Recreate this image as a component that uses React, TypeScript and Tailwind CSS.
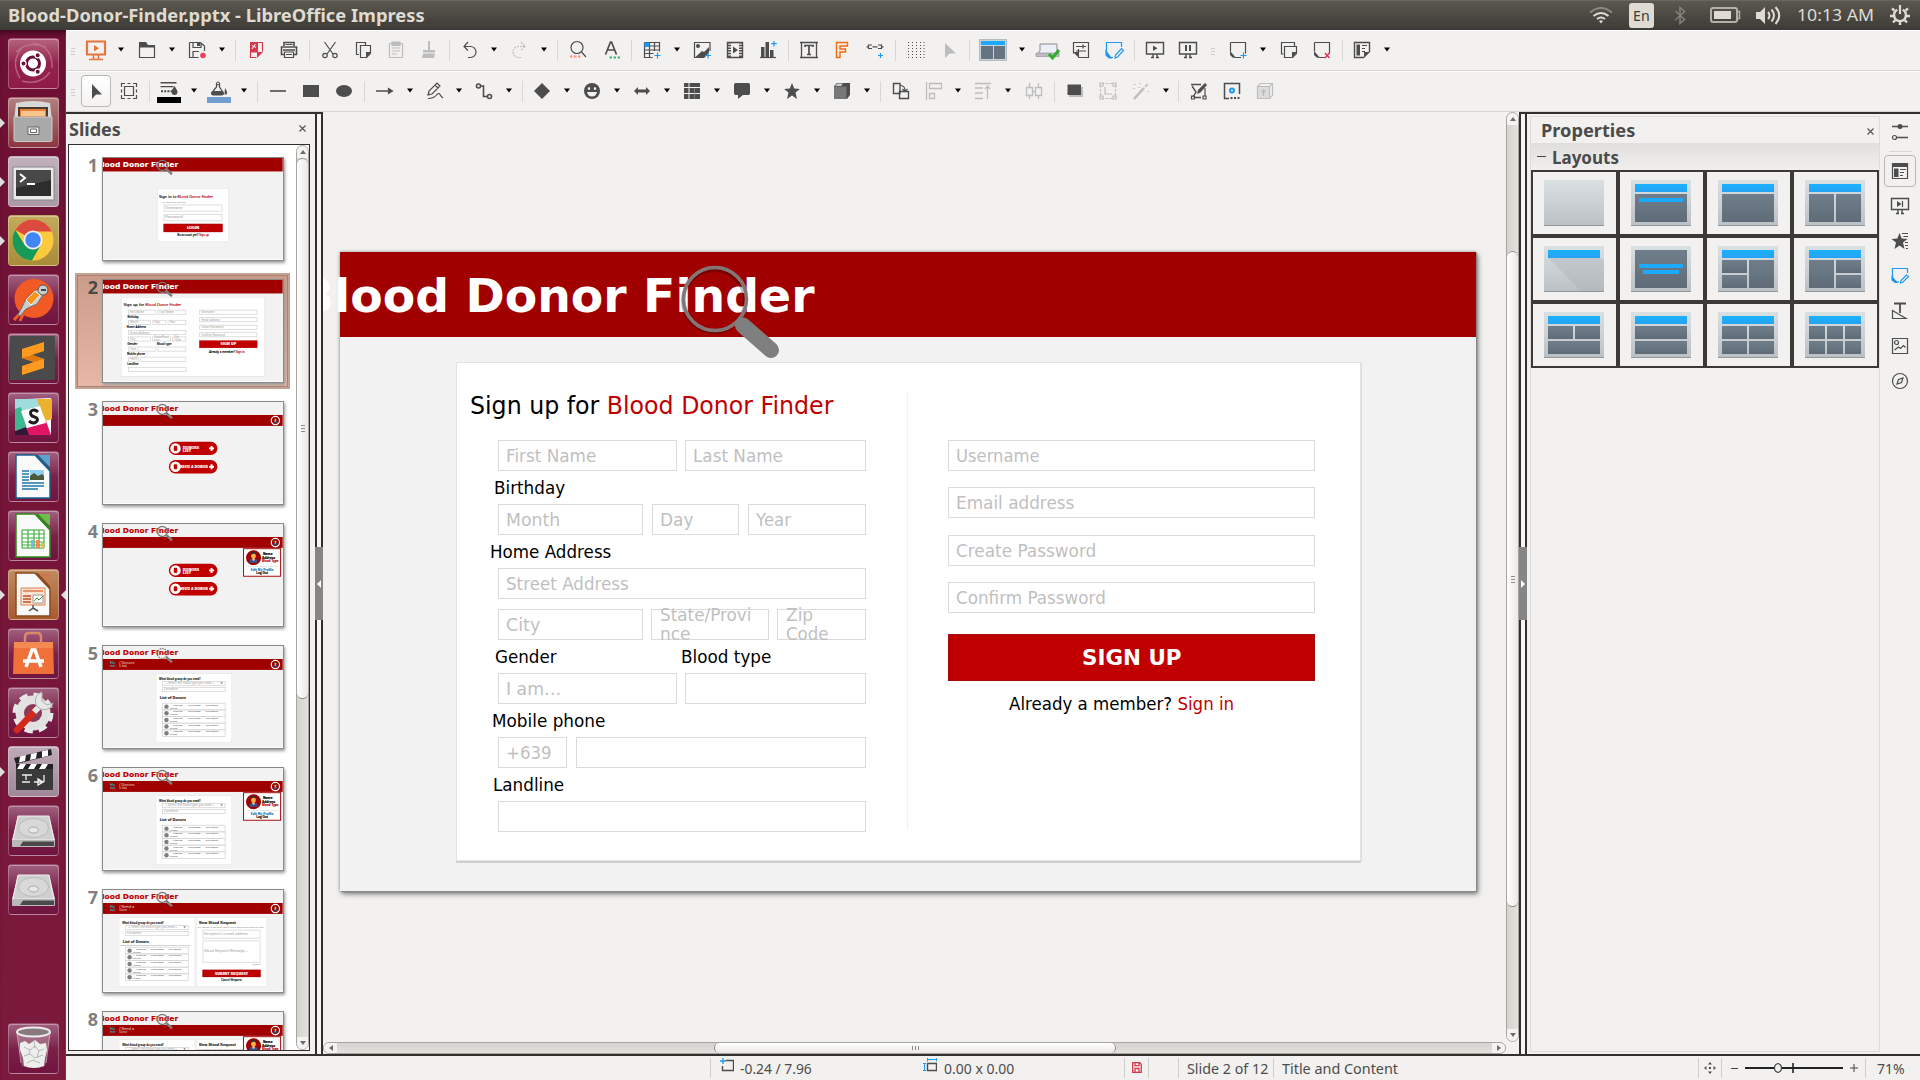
import React, { useLayoutEffect, useRef } from "react";

/* ---------- text ---------- */

/** Text squeezed or stretched to a given width. */
function Fit({ w, className = "", children }: { w: number; className?: string; children: React.ReactNode }) {
  const ref = useRef<HTMLSpanElement>(null);
  useLayoutEffect(() => {
    const el = ref.current;
    if (el && el.offsetWidth) el.style.transform = `scaleX(${w / el.offsetWidth})`;
  }, [w]);
  return (
    <span className={`inline-block shrink-0 whitespace-nowrap ${className}`} style={{ width: w }}>
      <span ref={ref} className="inline-block origin-left whitespace-pre">
        {children}
      </span>
    </span>
  );
}

/* ---------- slides (1136 x 639) ---------- */

const GRAY = "text-[#bfbfbf]";
const CARD = "bg-white border border-[#e3e3e3] shadow-[0_2px_0_#cfcfcf,1px_0_0_#dedede]";
const THICK = "border-4 border-[#e3e3e3] bg-white";

/** Form field; grows to the row's free width when it has no width class. */
function Field({ className = "flex-1", t, w = 0 }: { className?: string; t?: string; w?: number }) {
  return (
    <div className={`fld flex h-[31px] items-center border border-[#dadada] bg-white pt-[2px] pl-[7px] ${className}`}>
      {t && <Fit w={w} className={GRAY}>{t}</Fit>}
    </div>
  );
}

/** Field whose text breaks into two lines and spills over its border. */
function TallField({ className, lines }: { className: string; lines: [string, number][] }) {
  return (
    <div className={`fld flex h-[31px] flex-col justify-center border border-[#dadada] bg-white pl-[8px] ${className}`}>
      {lines.map(([t, w]) => <Fit key={t} w={w} className={`leading-[19px] ${GRAY}`}>{t}</Fit>)}
    </div>
  );
}

const Label = ({ className, w, children }: { className: string; w: number; children: string }) => (
  <div className={`h-[33px] pt-px leading-[32px] ${className}`}><Fit w={w}>{children}</Fit></div>
);

function Lens({ dashed = false }: { dashed?: boolean }) {
  return (
    <svg className="absolute top-[8px] left-[335px]" width="110" height="104" viewBox="335 8 110 104" fill="none">
      <circle cx="374" cy="49" r="31" stroke="#000" strokeOpacity=".25" strokeWidth="4" />
      <circle className="ring" cx="375" cy="47" r="31.500" stroke="#7f7f7f" strokeWidth="3.600" strokeDasharray={dashed ? "8 8" : undefined} />
      {!dashed && <circle cx="375" cy="47" r="31.500" stroke="#a33" strokeOpacity=".35" strokeWidth="1.600" strokeDasharray="1.500 1.500" />}
      <path d="M403 73.500 431 98" stroke="#7f7f7f" strokeWidth="16" strokeLinecap="round" />
    </svg>
  );
}

const Title = ({ c }: { c: string }) => (
  <Fit w={517} className={`-ml-[42px] text-[47px] leading-[47px] font-bold ${c}`}>Blood Donor Finder</Fit>
);

function Banner() {
  return (
    <div className="h-[85px] bg-[#a00000] pt-[20px]">
      <Title c="text-white" />
      <Lens />
    </div>
  );
}

function Slide2() {
  return (
    <>
      <Banner />
      <div className={`mt-[25px] ml-[116px] flex h-[499px] w-[905px] text-[17px] ${CARD}`}>
        <div className="flex w-[450px] flex-col pr-[41px] pl-[41px]">
          <div className="-ml-[28px] h-[77px] pt-[9px] text-[24px] leading-[68px]">
            <Fit w={363}>Sign up for <span className="text-[#c00000]">Blood Donor Finder</span></Fit>
          </div>
          <div className="flex gap-[8px]"><Field className="w-[179px]" t="First Name" w={90} /><Field t="Last Name" w={90} /></div>
          <Label className="-ml-[4px]" w={71}>Birthday</Label>
          <div className="flex gap-[9px]"><Field className="w-[145px]" t="Month" w={54} /><Field className="w-[87px]" t="Day" w={34} /><Field t="Year" w={35} /></div>
          <Label className="-ml-[8px]" w={121}>Home Address</Label>
          <div className="flex"><Field t="Street Address" w={123} /></div>
          <div className="mt-[10px] flex gap-[8px]">
            <Field className="w-[145px]" t="City" w={34} />
            <TallField className="w-[118px]" lines={[["State/Provi", 91], ["nce", 31]]} />
            <TallField className="flex-1" lines={[["Zip", 27], ["Code", 43]]} />
          </div>
          <div className="flex"><Label className="-ml-[3px] w-[186px]" w={62}>Gender</Label><Label className="" w={90}>Blood type</Label></div>
          <div className="flex gap-[8px]"><Field className="w-[179px]" t="I am…" w={55} /><Field /></div>
          <Label className="-ml-[6px]" w={113}>Mobile phone</Label>
          <div className="flex gap-[9px]"><Field className="w-[69px]" t="+639" w={46} /><Field /></div>
          <Label className="-ml-[5px]" w={71}>Landline</Label>
          <div className="flex"><Field /></div>
        </div>
        <div className="mt-[29px] h-[438px] w-px bg-[#f1f1f1]" />
        <div className="flex flex-1 flex-col gap-[16.4px] pt-[77px] pr-[45px] pl-[40px]">
          <Field className="" t="Username" w={84} />
          <Field className="" t="Email address" w={118} />
          <Field className="" t="Create Password" w={140} />
          <Field className="" t="Confirm Password" w={150} />
          <div className="mt-[4.8px] flex h-[47px] items-center justify-center border border-[#a30d0d] bg-[#c00000] pt-[2px] text-[21px] font-bold text-white"><Fit w={100}>SIGN UP</Fit></div>
          <div className="-mt-[16.4px] ml-[61px] leading-[46px]"><Fit w={225}>Already a member? <span className="text-[#c00000]">Sign in</span></Fit></div>
        </div>
      </div>
    </>
  );
}

function Slide1() {
  return (
    <>
      <Banner />
      <div className={`mt-[106px] ml-[343px] flex h-[339px] w-[452px] flex-col px-[36px] pt-[30px] text-[17px] ${THICK}`}>
        <div className="-ml-[30px] text-[24px] leading-[36px]"><Fit w={342}>Sign in to <span className="text-[#c00000]">Blood Donor Finder</span></Fit></div>
        <div className={`-ml-[8px] text-[13px] leading-[33px] ${GRAY}`}><Fit w={148}>All fields are required</Fit></div>
        <div className="flex h-[44px] shrink-0 items-center border-[5px] border-[#d6d6d6] px-[6px]"><Fit w={110} className={GRAY}>Username</Fit></div>
        <div className="mt-[17px] flex h-[44px] shrink-0 items-center border-[5px] border-[#d6d6d6] px-[6px]"><Fit w={110} className={GRAY}>Password</Fit></div>
        <div className="mt-[17px] flex h-[52px] shrink-0 items-center justify-center border-4 border-[#a30d0d] bg-[#c00000] text-[20px] font-bold text-white"><Fit w={78}>LOGIN</Fit></div>
        <div className="text-center leading-[36px]"><Fit w={200} className="text-left">No account yet? <span className="text-[#c00000]">Sign up</span></Fit></div>
      </div>
    </>
  );
}

function Person({ size }: { size: number }) {
  return (
    <svg className="shrink-0" width={size} height={size} viewBox="0 0 40 40">
      <circle cx="20" cy="20" r="19" fill="#a00000" />
      <path d="M10 33V27q0-4 5-4h10q5 0 5 4v6z" fill="#2f5597" />
      <path d="M17 20h6v6l-3 3-3-3z" fill="#f4b183" />
      <ellipse cx="20" cy="15" rx="6" ry="8" fill="#f4b040" />
      <path d="M13 14q0-9 7-9t7 9q-2-4-7-4t-7 4z" fill="#333" />
    </svg>
  );
}

function RedBar({ crumb, dashed }: { crumb?: string; dashed?: boolean }) {
  return (
    <>
      <div className="h-[82px] pt-[20px]"><Title c="text-[#c00000]" /></div>
      <div className="flex h-[69px] items-center justify-between bg-[#a00000] pr-[17px] pl-[44px] text-[20px] leading-[23px]">
        <div className="flex gap-[24px]">
          {crumb && (
            <>
              <div className="flex flex-col text-[#2aa5c0]"><Fit w={32}>Ho</Fit><Fit w={34}>me</Fit></div>
              <div className="flex flex-col text-[#d9a0a0]"><Fit w={96}>{`/ ${crumb}`}</Fit><Fit w={50}>{crumb === "Donors" ? "List" : "Donor"}</Fit></div>
            </>
          )}
        </div>
        <div className="flex h-[60px] w-[60px] items-center justify-center rounded-full border-[8px] border-white"><Person size={42} /></div>
      </div>
      <Lens dashed={dashed} />
    </>
  );
}

function Pill({ children }: { children: React.ReactNode }) {
  return (
    <div className="flex h-[84px] w-[307px] items-center rounded-full bg-[#c00000] pr-[20px] pl-[9px] text-[20px] leading-[24px] font-bold text-white">
      <div className="flex h-[66px] w-[66px] shrink-0 items-center justify-center rounded-full bg-white"><i className="block h-[32px] w-[22px] rounded-lg bg-[#c00000]" /></div>
      {children}
      <svg width="34" height="34" className="ml-auto shrink-0"><path d="M17 1v32M1 17h32" stroke="#fff" strokeWidth="12" /></svg>
    </div>
  );
}

/** Account menu that drops over the page below the avatar. */
function Popup() {
  return (
    <div className="absolute top-[153px] left-[885px] flex h-[180px] w-[240px] flex-col border-[6px] border-[#a00000] bg-white text-[18px] font-bold">
      <div className="flex h-[108px] items-center gap-[3px] pl-[10px]">
        <Person size={100} />
        <div className="flex flex-col leading-[23px]">
          <Fit w={60} className="ml-[6px]">Name</Fit>
          <Fit w={84}>Address</Fit>
          <Fit w={104} className="text-[#c00000]">Blood Type</Fit>
        </div>
      </div>
      <i className="mx-[14px] block h-[5px] bg-[#e0e0e0]" />
      <div className="flex flex-col items-center pt-[4px] leading-[24px]">
        <Fit w={142} className="text-[#2e75b6]">Edit My Profile</Fit>
        <Fit w={74}>Log Out</Fit>
      </div>
    </div>
  );
}

function DonorCard({ hint }: { hint?: string }) {
  return (
    <div className={`flex h-[440px] w-[484px] flex-col pr-[38px] pl-[38px] text-[17px] ${THICK}`}>
      <div className="-ml-[20px] pt-[12px] text-[19px] font-bold leading-[33px] text-[#333]"><Fit w={262}>What blood group do you need?</Fit></div>
      <div className="flex h-[31px] shrink-0 items-center justify-between border-[5px] border-[#d6d6d6] px-[14px]"><Fit w={310} className={GRAY}>-- Select the blood type you need --</Fit><span className="text-[#808080]">▼</span></div>
      <div className="mt-[7px] flex h-[31px] shrink-0 items-center border-[5px] border-[#d6d6d6] px-[6px]"><Fit w={90} className={GRAY}>Location</Fit></div>
      <div className="-ml-[16px] h-[68px] shrink-0 pt-[22px] text-[20px] font-bold leading-[30px] text-[#333]">
        <Fit w={166}>List of Donors</Fit>
        {hint && <div className={`-ml-[16px] text-[11px] leading-[14px] font-normal ${GRAY}`}><Fit w={440}>{hint}</Fit></div>}
      </div>
      {[0, 1, 2, 3, 4].map((i) => (
        <div key={i} className="-mb-[5px] flex h-[47px] shrink-0 items-center gap-[6px] border-[5px] border-[#d6d6d6] pl-[8px] text-[15px] leading-[19px] text-[#a0a0a0]">
          <i className="block h-[28px] w-[28px] shrink-0 rounded-full bg-[#7f7f7f]" />
          <div className="flex flex-col"><Fit w={284} className="ml-[22px]">Name     Address     Contact</Fit><Fit w={50}>Number</Fit></div>
        </div>
      ))}
    </div>
  );
}

function RequestSlide() {
  return (
    <>
      <RedBar crumb="Need a" />
      <div className="flex gap-[4px] pt-[22px] pl-[99px]">
        <DonorCard hint="These are the people that match the blood type and the location that you need" />
        <div className={`flex h-[440px] w-[450px] flex-col px-[38px] text-[17px] ${THICK}`}>
          <div className="-ml-[22px] pt-[14px] text-[20px] font-bold leading-[32px] text-[#333]"><Fit w={232}>New Blood Request</Fit></div>
          <div className={`-ml-[34px] text-[11px] leading-[28px] ${GRAY}`}><Fit w={420}>Your request will be sent to every donor that matches what you need</Fit></div>
          <div className="flex h-[56px] shrink-0 items-center border-[5px] border-[#d6d6d6] px-[6px]"><Fit w={276} className={GRAY}>Recipient’s e-mail address</Fit></div>
          <div className="mt-[12px] flex h-[140px] shrink-0 items-center border-[5px] border-[#d6d6d6] px-[6px]"><Fit w={276} className={GRAY}>Blood Request Message…</Fit></div>
          <div className={`h-[45px] shrink-0 text-right text-[13px] leading-[26px] ${GRAY}`}><Fit w={50} className="text-left">0/200</Fit></div>
          <div className="flex h-[46px] shrink-0 items-center justify-center border-4 border-[#a30d0d] bg-[#c00000] text-[19px] font-bold text-white"><Fit w={210}>SUBMIT REQUEST</Fit></div>
          <div className="text-center text-[18px] leading-[44px]"><Fit w={130} className="text-left">Cancel Request</Fit></div>
        </div>
      </div>
    </>
  );
}

function Home({ popup = false }: { popup?: boolean }) {
  return (
    <>
      <RedBar />
      <div className="flex flex-col gap-[32px] pt-[100px] pl-[416px]">
        <Pill><div className="ml-[13px] flex flex-col pt-[12px]"><Fit w={104}>DONORS</Fit><Fit w={52}>LIST</Fit></div></Pill>
        <Pill><Fit w={176} className="-mr-[8px] ml-[-4px]">NEED A DONOR</Fit></Pill>
      </div>
      {popup && <Popup />}
    </>
  );
}

const DonorsSlide = ({ popup = false }: { popup?: boolean }) => (
  <>
    <RedBar crumb="Donors" dashed={!popup} />
    <div className="pt-[22px] pl-[332px]"><DonorCard /></div>
    {popup && <Popup />}
  </>
);

const SLIDES: React.ReactNode[] = [
  <Slide1 />,
  <Slide2 />,
  <Home />,
  <Home popup />,
  <DonorsSlide />,
  <DonorsSlide popup />,
  <RequestSlide />,
  <><RequestSlide /><Popup /></>,
];

function Thumb({ n, children }: { n: number; children: React.ReactNode }) {
  const sel = n === 2;
  return (
    <div
      className={
        sel
          ? "flex h-[116px] w-[215px] shrink-0 border-2 border-[#c4a294] bg-gradient-to-b from-[#cb9c89] to-[#e6b8a5] pt-[4px] shadow-[inset_0_0_0_1px_#a98272]"
          : "flex h-[116px] w-[215px] shrink-0 border-2 border-transparent pt-[4px]"
      }
    >
      <div className={`flex w-[25px] shrink-0 justify-end pr-[4px] font-['Noto_Sans'] text-[18px] leading-[17px] font-bold ${sel ? "text-[#4a4a4a]" : "text-[#808080]"}`}>{n}</div>
      <div className="h-[104px] w-[182px] shrink-0 overflow-hidden border border-[#8a8a8a] bg-white shadow-[1px_2px_3px_#999]">
        <div className="relative h-[639px] w-[1136px] origin-top-left scale-[0.1583] overflow-hidden bg-[#f2f2f2] font-['DejaVu_Sans'] [-webkit-text-stroke-width:0.8px] [&_.fld]:border-[5px] [&_.fld]:border-[#d6d6d6] [&_.ring]:[stroke-width:8px]">{children}</div>
      </div>
    </div>
  );
}

/* ---------- toolbar ---------- */

const D = "#4d4d4d";
const L = "#bdbdbd";
const B = "#1e98f0";

const Ic = ({ children }: { children: React.ReactNode }) => (
  <svg width="24" height="24" viewBox="0 0 24 24" fill="none" className="block shrink-0" strokeWidth="1.2" stroke={D}>
    {children}
  </svg>
);

/** Toolbar button cell. */
const Btn = ({ children }: { children: React.ReactNode }) => (
  <div className="flex w-[33px] shrink-0 items-center justify-center"><Ic>{children}</Ic></div>
);

/** Drop-down arrow; its cell width tells how tightly the next button follows. */
const Arr = ({ w = "w-[17px]" }: { w?: string }) => (
  <div className={`flex shrink-0 justify-center ${w}`}>
    <svg width="6" height="5" viewBox="0 0 6 5" className="-mt-[2px] block"><path d="M0 .5h6L3 4.5z" fill="#000" /></svg>
  </div>
);

const Sep = () => <div className="flex w-[8px] shrink-0 justify-center"><i className="block h-[21px] w-px bg-[#d8d7d5]" /></div>;

const Grip = ({ className = "w-[13px]" }: { className?: string }) => (
  <div className={`flex shrink-0 flex-col items-center gap-[2px] pt-[3px] ${className}`}>
    <i className="block h-px w-[4px] bg-[#cfcecb]" />
    <i className="block h-px w-[4px] bg-[#cfcecb]" />
    <i className="block h-px w-[4px] bg-[#cfcecb]" />
  </div>
);

const note = (
  <>
    <path d="M4.500 4.500h15v11M4.500 4.500v9M9 19.500h6" />
    <path d="M4 13l6 6.800H7L4 17z" fill={D} stroke="none" />
  </>
);

function StandardBar() {
  return (
    <div className="flex h-[38px] items-center">
      <Grip />
      <Btn><path d="M3 3.500h18v13H3z" stroke="#e8743b" strokeWidth="2.200" /><path d="M10 7l5 3.200-5 3.300z" fill="#e8743b" stroke="none" /><path d="M9.500 17v4M14.500 17v4M5 21.500h14" stroke="#e8743b" strokeWidth="1.600" /></Btn>
      <Arr w="w-[18px]" />
      <Btn><path d="M4.500 8v11.500h15V8" /><path d="M4 4h7l2 3h7v2.500H4z" fill={D} stroke="none" /></Btn>
      <Arr />
      <Btn><path d="M4.500 4.500h11l4 3.500v5M4.500 4.500v15h9M8 4.500v5h8v-5M8 19v-5.500h6" /><path d="M12 5h3v3h-3z" fill={D} stroke="none" /><circle cx="18" cy="17.500" r="2.800" fill="#ee4058" stroke="none" /></Btn>
      <Arr w="w-[18px]" />
      <Sep />
      <Btn><path d="M6.500 13v6.500h6M14 4.500h4.500v9" stroke="#d8374c" /><path d="M6 4h8v10.500H6z" fill="#d8374c" stroke="none" /><path d="M8 11l3.500-5M8 7.500l4 2" stroke="#fff" strokeWidth="1" /><path d="M19 14h-6v6z" fill="#d8374c" stroke="none" /></Btn>
      <Btn><path d="M7 8V4.500h10V8M4.500 9h15v7.500h-15zM6 12h12" strokeWidth="1.600" /><path d="M7.500 14h9v5.500h-9z" fill="#f2f1ef" /><path d="M9 16.500h6M8.500 6.500h7" /></Btn>
      <Sep />
      <Btn><path d="M6.500 4l8.500 12M17.500 4 9 16" /><circle cx="7" cy="17.500" r="2.200" /><circle cx="17" cy="17.500" r="2.200" /></Btn>
      <Btn><path d="M8 16.500H5.500v-12h9V7" /><path d="M9.500 7.500h10v8l-4 4h-6z" /><path d="M20 14h-5v6z" fill={D} stroke="none" /></Btn>
      <Btn><g stroke={L}><path d="M5.500 5.500h13v14h-13zM8 10h8M8 13h8M8 16h5" /><path d="M8 4h8v3.500H8z" fill={L} /></g></Btn>
      <Btn><path d="M11 3h2v9h5v2.500H6V12h5zM6 15.500h12L17 20H5z" stroke="none" fill={L} /></Btn>
      <Sep />
      <Btn><path d="M10 4 6 8.500l4 4M6 8.500h6.500a5.500 5.500 0 0 1 0 11H10" /></Btn>
      <Arr w="w-[16px]" />
      <Btn><path d="M14 4l4 4.500-4 4M18 8.500h-6.500a5.500 5.500 0 0 0 0 11H14" stroke={L} strokeDasharray="2 1" /></Btn>
      <Arr w="w-[18px]" />
      <Sep />
      <Btn><circle cx="11" cy="9.500" r="6" /><path d="M15.500 14 20 19" /><path d="M4 18.500h2.500M8 18.500h2.500M12 18.500h2.500" stroke="#f2957a" strokeWidth="2" /></Btn>
      <Btn><path d="M6.500 16.500 11.500 4h1l5 12.500M8.500 12h7" strokeWidth="1.700" /><path d="M10.500 19.500H13M14.500 19.500H17M18.500 19.500H21" stroke="#3fb874" strokeWidth="2" /></Btn>
      <Sep />
      <Btn><path d="M4.500 4.500h15v9M4.500 4.500v15h8M4.500 8h15M4.500 12h15M4.500 15.500h9M9.500 4.500v15M14.500 4.500V13" /><path d="M4.500 4.500h5V9h-5z" fill={B} stroke="none" /><path d="M17.500 14.500v6M14.500 17.500h6" stroke={B} /></Btn>
      <Arr />
      <Btn><path d="M20 13V4.500H4.500v15H14" /><circle cx="8" cy="8" r="2" fill={D} stroke="none" /><path d="M5 19.500 12 13l2 1 5-5v6l-5 5z" fill={D} stroke="none" /><path d="M18 14.500v6M15 17.500h6" stroke={B} /></Btn>
      <Btn><path d="M4.500 4.500h15v15h-15z" strokeWidth="1.400" /><path d="M6.500 4v16M17.500 4v16" strokeWidth="3" strokeDasharray="1.500 1.200" /><path d="M10 8.500l5 3.500-5 3.500z" fill={D} stroke="none" /></Btn>
      <Btn><path d="M4 19.500h16" /><path d="M5 9h3.500v10H5zM9.500 4H13v15H9.500zM14 12h3.500v7H14z" fill={D} stroke="none" /><path d="M18 3v5.500M15.200 5.700h5.600" stroke={B} /></Btn>
      <Sep />
      <Btn><path d="M4.500 4.500h15v15h-15zM3 4.500h3M18 4.500h3M3 19.500h3M18 19.500h3" strokeWidth="1.300" /><path d="M8 9V7.500h8V9M12 7.500v9M10 16.500h4" strokeWidth="1.700" /></Btn>
      <Btn><path d="M6.500 4.500h11V8H10v3h5.500v3H10v5.500H6.500z" stroke="#f66a0a" strokeWidth="1.400" /></Btn>
      <Btn><path d="M9 7H5.500v3.500H9M15 7h3.500v3.500H15M9.500 8.800h5M3.500 8.800h2M18.500 8.800h2" /><path d="M17.500 15v5M15 17.500h5" stroke={B} /></Btn>
      <Sep />
      <Btn><path d="M4.500 4v17M8.500 4v17M12.500 4v17M16.500 4v17M20 4v17" strokeWidth="1" strokeDasharray="1 2" /></Btn>
      <Btn><path d="M8 5v15l4.500-4.500H19z" fill={L} stroke="none" /></Btn>
      <Sep />
      <div className="flex w-[40px] shrink-0 justify-center">
        <div className="flex h-[22px] w-[28px] flex-col gap-px border border-[#b5bcc0] bg-[#ccd3d7] p-px">
          <i className="block h-[4px] bg-[#1eaafc]" />
          <div className="flex flex-1 gap-px"><i className="flex-1 bg-[#667482]" /><i className="flex-1 bg-[#667482]" /></div>
        </div>
      </div>
      <Arr w="w-[18px]" />
      <div className="flex w-[33px] shrink-0 justify-center">
        <svg width="26" height="24" viewBox="0 0 26 24"><path d="M5 6h17v8l2 3H1l4-4z" fill="#eceef8" stroke="#8b8b90" /><path d="M1 15h23v3.500H1z" fill="#bcbcc4" stroke="#8b8b90" strokeWidth=".6" /><path d="M14 16l3.500 4L24 12" stroke="#2fae27" strokeWidth="3" fill="none" /></svg>
      </div>
      <Btn><path d="M9 19.500h10.500v-15h-15v11" /><path d="M4 14h6v6z" fill={D} stroke="none" /><path d="M7 8.500h10M7 13h10M14 6.500v4M9.500 11v4" /></Btn>
      <Btn><g stroke={B}><path d="M4.500 14V4.500h15V9M8 19.500h3" /><path d="M4 13l5 6.800H7L4 17z" fill={B} /><path d="M13 20l.5-3 6-6.500 2 2-6 6.500z" /></g></Btn>
      <Sep />
      <Btn><path d="M3.500 4.500h17v11.500h-17zM10 16v3M14 16v3M8 19.500h3M13 19.500h3" strokeWidth="1.400" /><path d="M10 7.500l4.500 2.800L10 13z" fill={D} stroke="none" /></Btn>
      <Btn><path d="M3.500 4.500h17v11.500h-17zM10 16v3M14 16v3M8 19.500h3M13 19.500h3" strokeWidth="1.400" /><path d="M10 7v6M14 7v6" strokeWidth="2" /></Btn>
      <Grip className="w-[17px]" />
      <Btn>{note}<path d="M17.500 14.500v6M14.500 17.500h6" stroke={B} /></Btn>
      <Arr w="w-[18px]" />
      <Btn><path d="M6.500 16H4.500V4.500h13V8" /><path d="M7.500 8.500h12v7l-4 4h-8z" /><path d="M20 14h-5v6z" fill={D} stroke="none" /></Btn>
      <Btn>{note}<path d="M15 15l4.500 5M19.500 15 15 20" stroke="#d8374c" strokeWidth="1.400" /></Btn>
      <Sep />
      <Btn><path d="M13 19.500H3.500v-15h15V14" strokeWidth="1.400" /><path d="M19 14h-6v6z" fill={D} stroke="none" /><path d="M5.500 6.500H9v11H5.500z" fill={D} stroke="none" /><path d="M11 7.500h5M11 10.500h3M11 13.500h3" /></Btn>
      <Arr w="w-[16px]" />
    </div>
  );
}

function DrawingBar() {
  return (
    <div className="flex h-[38px] items-center">
      <Grip />
      <div className="flex w-[33px] shrink-0 justify-center">
        <div className="flex h-[32px] w-[30px] items-center justify-center rounded-[4px] border border-[#b9b7b3] bg-gradient-to-b from-white to-[#f3f2f1] pl-px"><Ic><path d="M8 5v15l4-4.500h6z" fill={D} stroke="none" /></Ic></div>
      </div>
      <Btn><path d="M7.500 7.500h9v9h-9z" /><path d="M4.500 8V4.500H8M16 4.500h3.500V8M19.500 16v3.500H16M8 19.500H4.500V16M10.500 4.500h3M10.500 19.500h3M4.500 10.500v3M19.500 10.500v3" /></Btn>
      <Sep />
      <div className="flex w-[33px] shrink-0 justify-center pr-px"><svg width="24" height="24" viewBox="0 0 24 24" className="mt-[2px]"><path d="M3.500 2h16v1.500h-16zM3.500 6h13v1.200h-13z" fill={D} /><path d="M4 11.200h12" stroke={D} strokeWidth="2" strokeDasharray="2 1.200" /><path d="M17.500 6q3 4.500 3 6a2.900 2.900 0 0 1-6 0q0-1.500 3-6z" fill={D} /><path d="M0 17h24v6H0z" fill="#000" /></svg></div>
      <Arr w="w-[16px]" />
      <div className="flex w-[33px] shrink-0 justify-center"><svg width="24" height="24" viewBox="0 0 24 24" className="mt-[2px]" fill="none"><path d="M9.500 3v4L4.500 13q0 2 3 2h6q3 0 3-2L12.500 7V3" stroke={D} strokeWidth="1.200" /><path d="M6 11h9l1.500 2q0 2-3 2h-6q-3 0-3-2z" fill={D} /><path d="M18 8q3 4 1.500 6.500h-2z" fill={D} /><circle cx="11" cy="3.500" r="1.500" stroke={D} /><path d="M0 17h24v6H0z" fill="#729fcf" /></svg></div>
      <Arr w="w-[18px]" />
      <Sep />
      <Btn><path d="M4 12h16" strokeWidth="1.600" /></Btn>
      <Btn><path d="M4 6h16v12H4z" fill={D} stroke="none" /></Btn>
      <Btn><ellipse cx="12" cy="12" rx="8" ry="6" fill={D} stroke="none" /></Btn>
      <Sep />
      <Btn><path d="M3 12h14" strokeWidth="1.500" /><path d="M15.500 9.500l4 2.500-4 2.500z" fill={D} /></Btn>
      <Arr />
      <Btn><path d="M5 16l1-4 8-8 3 3-8 8zM12 6l3 3M5 16l2-1" /><path d="M5 19.500q6 0 9-4 2-2 3 0t3 3.500" /></Btn>
      <Arr w="w-[16px]" />
      <Btn><circle cx="6.500" cy="7" r="2" strokeWidth="1.600" /><circle cx="17.500" cy="17.500" r="2" strokeWidth="1.600" /><path d="M8.500 7h3v10.500h4" strokeWidth="1.600" /></Btn>
      <Arr w="w-[18px]" />
      <Sep />
      <Btn><path d="M11 4l8 8-8 8-8-8z" fill={D} stroke="none" /></Btn>
      <Arr w="w-[16px]" />
      <Btn><circle cx="12" cy="12" r="8" fill={D} stroke="none" /><ellipse cx="9" cy="9.500" rx="1.200" ry="1.600" fill="#f2f1ef" stroke="none" /><ellipse cx="15" cy="9.500" rx="1.200" ry="1.600" fill="#f2f1ef" stroke="none" /><path d="M7 13h10q-1 4.500-5 4.500T7 13z" fill="#f2f1ef" stroke="none" /></Btn>
      <Arr />
      <Btn><path d="M4 12l4-4v2.500h8V8l4 4-4 4v-2.500H8V16z" fill={D} stroke="none" /></Btn>
      <Arr />
      <Btn><path d="M4 4h4.500v4H4zM9.500 4H20v4H9.500zM4 9h4.500v5H4zM9.500 9H20v5H9.500zM4 15h4.500v5H4zM9.500 15H20v5H9.500z" fill={D} stroke="none" /><path d="M14.500 9v11" stroke="#8a8a8a" strokeWidth=".8" /></Btn>
      <Arr />
      <Btn><path d="M5.500 4h13Q20 4 20 6v8q0 2-1.500 2H13l-5 4v-4H5.500Q4 16 4 14V6q0-2 1.500-2z" fill={D} stroke="none" /></Btn>
      <Arr />
      <Btn><path d="M12 4l2.200 5.500 5.800.4-4.500 3.700L17 20l-5-3.500L7 20l1.500-6.400L4 9.900l5.800-.4z" fill={D} stroke="none" /></Btn>
      <Arr />
      <Btn><path d="M4 7l3-3h13v12l-3 4H4z" fill={D} stroke="none" /><path d="M4 7.500h12.500V20H4z" fill="#777" stroke="none" /><path d="M5 7l2.500-2.500H13L11 7z" fill="#ccc" stroke="none" /></Btn>
      <Arr w="w-[18px]" />
      <Sep />
      <Btn><path d="M4.500 4.500h6.500v10H4.500zM10.500 12.500v7h9v-7z" fill="#f2f1ef" strokeWidth="1.400" /><path d="M11 6.500q5 0 5 5M13.500 10l2.500 2.500 2.500-2.500" /></Btn>
      <Btn><path d="M4.500 3v18M7.500 4.500h12v5h-12zM7.500 14.500h5v5h-5z" stroke={L} strokeWidth="1.300" /></Btn>
      <Arr w="w-[16px]" />
      <Btn><path d="M4 4.500h16M4 9h8M4 14h8M4 19.500h8M16.500 20V7M14 10l2.500-3L19 10" stroke={L} strokeWidth="1.300" /></Btn>
      <Arr w="w-[18px]" />
      <Btn><path d="M4.500 8.500h6v8h-6zM13.500 8.500h6v8h-6zM7.500 4v4M16.500 4v4M7.500 17v3M16.500 17v3M10.500 12.500h3" stroke={L} strokeWidth="1.300" /></Btn>
      <Sep />
      <Btn><path d="M6 8h14v10H6z" fill={L} stroke="none" /><path d="M4.500 5.500H18V16H4.500z" fill={D} stroke="none" /></Btn>
      <Btn><g stroke={L}><path d="M6 4.500h12M6 19.500h12M4.500 6v12M19.500 6v12" strokeDasharray="2.500 1.500" /><path d="M9 8v7h7" /><path d="M4 4h3v3H4zM17 4h3v3h-3zM4 17h3v3H4zM17 17h3v3h-3z" fill="#f2f1ef" /></g></Btn>
      <Btn><path d="M5 20 15 9" stroke={L} strokeWidth="2.600" /><path d="M16 8l3-3M6 5v1M11 4v1M19 12v1M5 9v1M10 8v1" stroke={L} strokeWidth="1.500" /></Btn>
      <Arr />
      <Sep />
      <Btn><path d="M4 5.500h10M14 18.500H7M5 7l4 6-3 5" strokeWidth="1.400" /><path d="M10 15l1-4 7-7 2 2-6.500 7.500z" fill={D} stroke="none" /><path d="M4.500 17h3v3h-3zM16 17h3v3h-3z" /><path d="M18 9v8" /></Btn>
      <Btn><path d="M19.500 15V4.500h-15V19.500H9" strokeWidth="1.500" /><circle cx="12" cy="11.500" r="2" stroke={B} strokeWidth="2" /><path d="M10.500 19h9.500" strokeWidth="2" strokeDasharray="2 1.500" /></Btn>
      <Btn><g stroke={L}><path d="M4.500 7.500h12v12h-12z" fill="#dcdcdc" /><path d="M4.500 7.500l3-3h12v12l-3 3M16.500 7.500l3-3" /><path d="M10.500 17v-6M8.500 13l2-2 2 2" strokeWidth="1.500" /></g></Btn>
    </div>
  );
}

/* ---------- launcher ---------- */

const TILE = "flex h-[51px] w-[51px] shrink-0 items-center justify-center overflow-hidden rounded-[4px] border border-white/25 shadow-[inset_0_1px_0_rgba(255,255,255,0.35)]";
const WINE = "bg-gradient-to-b from-[#a06080] via-[#7c2048] to-[#701440]";

const Doc = ({ c, d, children }: { c: string; d: string; children: React.ReactNode }) => (
  <>
    <path d="M8 4h19l15 16v27H8z" fill="#fafafa" stroke={d} strokeWidth="1.500" />
    <path d="M30 4h12v12z" fill={c} />
    <path d="M27 4l15 16V17L30 4z" fill={d} />
    {children}
  </>
);

const Disk = () => (
  <>
    <path d="M10 11h31l6 24v4H4v-4z" fill="#d9d9d9" />
    <path d="M10 11h31l5 24H5z" fill="#cfcfcf" stroke="#efefef" />
    <ellipse cx="25.500" cy="23" rx="15" ry="9.500" fill="#d8d8d8" stroke="#bababa" />
    <ellipse cx="25.500" cy="25" rx="5" ry="3" fill="#e8e8e8" stroke="#aaa" />
    <path d="M4 35h43v6q0 1-1 1H5q-1 0-1-1z" fill="#b9b9b9" />
    <path d="M15 36.500h31v4.500H12z" fill="#4a4a4a" />
  </>
);

const LAUNCH: { bg: string; l?: boolean; r?: boolean; el: React.ReactNode }[] = [
  { bg: "bg-gradient-to-b from-[#b5627f] via-[#93224b] to-[#8f1c48]", el: <><path d="M8 14Q20 2 38 9M12 40Q2 24 14 10M42 34Q32 48 14 43M25 5Q45 8 44 30" stroke="#c67a94" strokeWidth="1.500" fill="none" opacity=".7" /><circle cx="25" cy="25.500" r="13" fill="#fff" /><circle cx="25" cy="25.500" r="6.500" stroke="#6b1038" strokeWidth="3" fill="none" /><g fill="#6b1038" stroke="#fff" strokeWidth="1.200"><circle cx="15.500" cy="25.500" r="2.600" /><circle cx="29.700" cy="17.300" r="2.600" /><circle cx="29.700" cy="33.700" r="2.600" /></g></> },
  { bg: "bg-gradient-to-b from-[#b08080] to-[#8c3540]", l: true, el: <><path d="M8 6q17-4 34 0l2 18H6z" fill="#d8d8d8" /><path d="M10 10h30v10H10z" fill="#4a3a30" /><path d="M12 12h26v8H12z" fill="#e8803a" /><path d="M13 14h24v5H13z" fill="#f6c58c" /><path d="M6 20h38v23q0 1.500-1.500 1.500h-35Q6 44.500 6 43z" fill="#a9a9a9" stroke="#c9c9c9" /><path d="M20 30h11v7.500H20z" fill="#eee" stroke="#666" /><path d="M22.500 32h6v3.500h-6z" fill="#fff" stroke="#666" /></> },
  { bg: "bg-gradient-to-b from-[#c2b0bd] to-[#ad98a6]", l: true, el: <><path d="M5 11h41v33H5z" fill="#e9e9e9" stroke="#888" /><path d="M8 14h35v26H8z" fill="#2d2d2d" /><path d="M8 14h35v10L8 32z" fill="#484848" /><path d="M12 18l5 4-5 4M19 28h8" stroke="#fff" strokeWidth="2" fill="none" /></> },
  { bg: "bg-gradient-to-b from-[#c3ab5c] to-[#a98c38]", l: true, el: <><circle cx="25" cy="25" r="20.500" fill="#fdca3e" /><path d="M25 25 7.300 14.700A20.500 20.500 0 0 1 43.700 16.500H25z" fill="#dc4a3d" /><path d="M7.300 14.700A20.500 20.500 0 0 0 24 45.500l8.500-15H17z" fill="#159a58" /><circle cx="25" cy="25" r="9.500" fill="#f1f1f1" /><circle cx="25" cy="25" r="7.700" fill="#4285f4" /></> },
  { bg: WINE, el: <><circle cx="26" cy="24.500" r="19.500" fill="#f15a24" /><path d="M6 46l9-10M12 47l4-9" stroke="#f15a24" strokeWidth="3" /><path d="M10 41l7-14 6-7 10-7 4 5-8 12-11 5-6 7z" fill="#c9ced1" stroke="#6d6d6d" /><path d="M18 26l9-9 5 4-9 10z" fill="#f7941d" stroke="#fff" strokeWidth=".8" /><circle cx="35" cy="16" r="5" fill="#c9ced1" stroke="#555" /><path d="M33 16h5" stroke="#444" strokeWidth="2" /></> },
  { bg: WINE, el: <><path d="M2 3h45v44H2z" fill="#4a4a4a" /><path d="M14 16l22-7v9l-12 4 12 4v9l-22 7v-9l12-4-12-4z" fill="#ff9a1f" /><path d="M14 25l12 4 10-3-12-4z" fill="#e07a10" /></> },
  { bg: WINE, el: <><path d="M7 13l12-6 24-1v37H8z" fill="#fff" /><path d="M7 7h22l4 9-20 5-6 2z" fill="#9fdcde" /><path d="M29 7h15v20l-6 2-6-12z" fill="#ecb22e" /><path d="M7 17l6-2 6 20-12 4z" fill="#3eb890" /><path d="M18 36l20-7 5 14H20z" fill="#e01563" /><path d="M7 39l11-4 3 8H7z" fill="#33173a" /><path d="M13 19l19-5 6 17-19 5z" fill="#fff" /><path d="M30 20q-3-3-6-1.500T24 24l4 1.500q3 2 0 4.500t-7-1" stroke="#1f1f1f" strokeWidth="3" fill="none" /></> },
  { bg: WINE, el: <Doc c="#5aa4cc" d="#17608f"><path d="M14 20h7M14 23h7M14 26h7M14 29h7M14 32h22M14 35h22M14 38h16" stroke="#2078a8" strokeWidth="1.500" /><path d="M22 19h14v10H22z" fill="#8fd0f0" /><path d="M22 29v-4l4-3 4 3 4-2 2 2v4z" fill="#4a5a3a" /></Doc> },
  { bg: WINE, el: <Doc c="#6cc04a" d="#2c8a1c"><path d="M14 20h22v18H14z" fill="#fff" stroke="#2ca02c" /><path d="M14 24h22M14 28h22M14 32h22M14 35h22M20 20v18M26 20v18M31 20v18" stroke="#3fb03f" strokeWidth="1.200" /><path d="M23 30h3v8h-3z" fill="#78b8e8" /><path d="M28 30h3v8h-3z" fill="#f08a5a" /><path d="M33 33h3v5h-3z" fill="#f0c040" /></Doc> },
  { bg: "bg-gradient-to-b from-[#c08a60] to-[#a85a30]", l: true, r: true, el: <Doc c="#c87a50" d="#8c4a1c"><path d="M13 19h24v17H13z" fill="#fbe3d3" stroke="#e0804a" /><path d="M15 22h20" stroke="#e8906a" strokeWidth="2" /><path d="M15 27h8M15 30h8M15 33h8" stroke="#c0502a" strokeWidth="1.500" /><path d="M25 26h10v8H25z" fill="#fff" stroke="#999" /><path d="M26 32l3-3 2 2 4-4" stroke="#4a9a3a" fill="none" /><path d="M25 36v3l-4 3M25 39l5 3" stroke="#555" strokeWidth="1.500" fill="none" /></Doc> },
  { bg: WINE, el: <><path d="M6 14h39l1 32H5z" fill="#f0703a" /><path d="M6 14h39v6H6z" fill="#f58a50" /><path d="M17 16V9q0-4 4-4h8q4 0 4 4v7" stroke="#d88a6a" strokeWidth="2.500" fill="none" /><path d="M18 39l6-17h3l6 17M15 33h21" stroke="#fff" strokeWidth="3.500" fill="none" /></> },
  { bg: WINE, el: <><circle cx="25" cy="26" r="17.500" fill="#dedede" stroke="#e6e6e6" strokeWidth="6" strokeDasharray="8 5.740" /><circle cx="25" cy="26" r="16" fill="#e2e2e2" /><circle cx="25" cy="26" r="9" fill="#8a3a55" /><path d="M9 43 27 24" stroke="#d42a1e" strokeWidth="6.500" strokeLinecap="round" /><path d="M26 25l9-9" stroke="#e6e6e6" strokeWidth="6" /><path d="M34 5a9 9 0 1 0 11 11l-6 2-5-4z" fill="#e6e6e6" stroke="#aaa" /></> },
  { bg: "bg-gradient-to-b from-[#c0aab8] to-[#a08898]", l: true, el: <><path d="M8 20h37v24H8z" fill="#3a3a3a" /><path d="M8 18h37v5H8z" fill="#222" /><path d="M12 18h6l-3 5H9zM23 18h6l-3 5h-6zM34 18h6l-3 5h-6z" fill="#fff" /><path d="M6 12 43 3l1 6L8 18z" fill="#222" /><path d="M12 10.500l6-1.400-1 6-6 1.500zM23 8l6-1.500-1 6-6 1.400zM34 5.300l6-1.400v5.800l-6 1.600z" fill="#fff" /><path d="M14 29h10M18 29v5M14 36h8M26 36h10M30 33v6l5-3zM36 29v7" stroke="#eee" strokeWidth="1.300" fill="none" /></> },
  { bg: WINE, el: <Disk /> },
  { bg: WINE, el: <Disk /> },
];

function Tile({ t }: { t: (typeof LAUNCH)[number] }) {
  return (
    <div className="flex h-[51px] shrink-0 items-center">
      <div className="w-[8px] shrink-0">{t.l && <svg width="6" height="10"><path d="M0 0l5 5-5 5z" fill="#ddd" /></svg>}</div>
      <div className={`${TILE} ${t.bg}`}>
        <svg width="51" height="51" viewBox="0 0 51 51" className="shrink-0">{t.el}</svg>
      </div>
      <div className="flex w-[7px] shrink-0 justify-end">{t.r && <svg width="6" height="10"><path d="M6 0 1 5l5 5z" fill="#ddd" /></svg>}</div>
    </div>
  );
}

const Trash = () => (
  <>
    <path d="M9 10l5 33q11 4 23 0l5-33z" fill="#ddd" fillOpacity=".3" />
    <path d="M12 20l5-2 4 3 6-4 5 4 6-1 1 7-2 8-1 8q-10 4-20 0l-1-8-3-8z" fill="#eceeec" />
    <path d="M16 24l6 3 5-4 4 5 5-2M16 33l6-2 5 4 8-3M19 40l6-3 7 3M22 26l-1 6M31 27l-2 8M26 18l1 7" stroke="#b5b8b5" fill="none" />
    <ellipse cx="25.500" cy="9" rx="16.500" ry="4.500" fill="#8a7a80" stroke="#ececec" strokeWidth="2" />
    <path d="M9 10l4 30M42 10l-4 30" stroke="#fff" strokeOpacity=".5" />
  </>
);

function Launcher() {
  return (
    <div className="flex w-[66px] shrink-0 flex-col gap-[8px] bg-gradient-to-b from-[#6d1034] via-[#761538] to-[#7c1a3c] pt-[8px] shadow-[inset_0_6px_6px_-4px_#30041a,inset_-1px_0_0_#8c2f50]">
      {LAUNCH.map((t, i) => <Tile key={i} t={t} />)}
      <div className="mt-auto mb-[6px]"><Tile t={{ bg: WINE, el: <Trash /> }} /></div>
    </div>
  );
}

/* ---------- scrollbars ---------- */

const Up = () => <svg width="6" height="4"><path d="M0 4 3 0l3 4z" fill="#6b6b6b" /></svg>;
const Down = () => <svg width="6" height="4"><path d="M0 0h6L3 4z" fill="#6b6b6b" /></svg>;

function VScroll({ before, thumb }: { before: string; thumb: string }) {
  return (
    <div className="flex w-[13px] shrink-0 flex-col rounded-[7px] border border-[#a8a49e] bg-gradient-to-r from-[#d4d3cf] to-[#e2e1de]">
      <div className="flex h-[12px] shrink-0 items-center justify-center rounded-t-[6px] bg-[#f4f3f2]"><Up /></div>
      <div className={`shrink-0 ${before}`} />
      <div className={`flex shrink-0 flex-col items-center justify-center gap-[2px] rounded-[6px] border-y border-[#8f8b85] bg-gradient-to-r from-white to-[#e9e8e6] ${thumb}`}>
        <i className="block h-px w-[4px] bg-[#8c8c8c]" /><i className="block h-px w-[4px] bg-[#8c8c8c]" /><i className="block h-px w-[4px] bg-[#8c8c8c]" />
      </div>
      <div className="flex-1" />
      <div className="flex h-[12px] shrink-0 items-center justify-center rounded-b-[6px] bg-[#f4f3f2]"><Down /></div>
    </div>
  );
}

function HScroll() {
  return (
    <div className="flex h-[13px] w-[1183px] rounded-[7px] border border-[#a8a49e] bg-gradient-to-b from-[#d4d3cf] to-[#e2e1de]">
      <div className="flex w-[13px] items-center justify-center rounded-l-[6px] bg-[#f4f3f2]"><svg width="4" height="6"><path d="M4 0v6L0 3z" fill="#6b6b6b" /></svg></div>
      <div className="w-[377px]" />
      <div className="flex w-[402px] items-center justify-center gap-[2px] rounded-[6px] border-x border-[#8f8b85] bg-gradient-to-b from-white to-[#e9e8e6]">
        <i className="block h-[4px] w-px bg-[#8c8c8c]" /><i className="block h-[4px] w-px bg-[#8c8c8c]" /><i className="block h-[4px] w-px bg-[#8c8c8c]" />
      </div>
      <div className="flex-1" />
      <div className="flex w-[13px] items-center justify-center rounded-r-[6px] bg-[#f4f3f2]"><svg width="4" height="6"><path d="M0 0v6l4-3z" fill="#6b6b6b" /></svg></div>
    </div>
  );
}

function Splitter({ right = false }: { right?: boolean }) {
  return (
    <div className="w-[8px] shrink-0 border-2 border-[#322f2c] bg-[#f6f5f4] pt-[433px]">
      <div className="-mx-[2px] flex h-[73px] items-center justify-center bg-[#858585]">
        <svg width="6" height="8">{right ? <path d="M1 0v8l4-4z" fill="#fff" /> : <path d="M5 0v8L1 4z" fill="#fff" />}</svg>
      </div>
    </div>
  );
}

const Close = () => <svg width="7" height="7"><path d="M.5.5l6 6M6.500.5l-6 6" stroke="#555" strokeWidth="1.200" /></svg>;

/* ---------- properties panel ---------- */

const BODY = "bg-gradient-to-b from-[#707e8b] to-[#5f6c78]";
const HEAD = <i className="block h-[8px] shrink-0 bg-gradient-to-b from-[#18b2ff] to-[#25a3f2]" />;
const Cols = ({ n }: { n: number }) => (
  <div className="flex flex-1 gap-[2px]">
    {Array.from({ length: n }, (_, i) => <i key={i} className={`flex-1 ${BODY}`} />)}
  </div>
);
const Stack = () => <div className="flex flex-1 flex-col gap-[2px]"><i className={`flex-1 ${BODY}`} /><i className={`flex-1 ${BODY}`} /></div>;

const LAYOUTS: React.ReactNode[] = [
  null,
  <>{HEAD}<div className={`flex-1 px-[4px] pt-[4px] ${BODY}`}><i className="block h-[4px] bg-[#1eaafc]" /></div></>,
  <>{HEAD}<Cols n={1} /></>,
  <>{HEAD}<Cols n={2} /></>,
  <>{HEAD}<svg width="52" height="30" className="-mt-[2px] overflow-visible"><path d="M0 0h52l4 2v32H34z" fill="#a9abb2" fillOpacity=".35" /></svg></>,
  <div className={`flex flex-1 flex-col items-center gap-[2px] pt-[14px] ${BODY}`}><i className="block h-[4px] w-[44px] bg-[#1eaafc]" /><i className="block h-[4px] w-[36px] bg-[#1eaafc]" /></div>,
  <>{HEAD}<div className="flex flex-1 gap-[2px]"><Stack /><i className={`flex-1 ${BODY}`} /></div></>,
  <>{HEAD}<div className="flex flex-1 gap-[2px]"><i className={`flex-1 ${BODY}`} /><Stack /></div></>,
  <>{HEAD}<Cols n={2} /><Cols n={1} /></>,
  <>{HEAD}<Cols n={1} /><Cols n={1} /></>,
  <>{HEAD}<Cols n={2} /><Cols n={2} /></>,
  <>{HEAD}<Cols n={3} /><Cols n={3} /></>,
];

const DECKS: React.ReactNode[] = [
  <><path d="M3.500 4.500h17v11h-17zM10 16v3M14 16v3M8 19.500h3M13 19.500h3" strokeWidth="1.400" /><path d="M9 7l4.500 3L9 13z" fill={D} stroke="none" /><path d="M14.500 7v6" /></>,
  <><path d="M11.500 4l2.200 5.500 5.800.4-4.500 3.700 1.500 6.400-5-3.500-5 3.500L8 13.600 3.500 9.900l5.800-.4z" fill={D} stroke="none" /><path d="M14 4.500h6M15.500 7.500H20M17 13.500h3M17 16.500h3M18 19.500h2" strokeWidth="1.200" /></>,
  <g stroke={B}><path d="M4.500 14V4.500h15V9M8 18h3" /><path d="M4 13l5 5.500H7L4 16z" fill={B} /><path d="M12.500 19l.5-2.500 5.500-5.500 2 1.500-6 6z" /></g>,
  <><path d="M6 4.500h12M12 4.500V14" strokeWidth="1.800" /><path d="M4.500 11.500v8h13.500z" /></>,
  <><path d="M4.500 4.500h15v15h-15z" /><circle cx="8.500" cy="8.500" r="2" /><path d="M6.500 16l4-3 2 1.500 3-3 2 2" /></>,
  <><circle cx="12" cy="12" r="7.500" /><path d="M9 15l1.500-4.500L15 9l-1.500 4.500z" /></>,
];

function Properties() {
  return (
    <div className="flex flex-1 border-t-2 border-b-2 border-[#322f2c] pt-[2px] pl-[3px]">
      <div className="flex h-[936px] w-[350px] shrink-0 flex-col border border-[#dddcda]">
        <div className="flex h-[26px] items-center justify-between pr-[5px] pl-[10px] font-['Noto_Sans'] text-[18px] leading-[26px] font-bold text-[#4b4b4b]">
          <Fit w={94} className="leading-[26px]">Properties</Fit>
          <div className="pt-[3px]"><Close /></div>
        </div>
        <div className="flex h-[27px] items-center gap-[6px] bg-gradient-to-b from-[#e0dfde] to-[#f0efee] pl-[6px] font-['Noto_Sans'] text-[18px] font-bold text-[#4b4b4b]">
          <i className="block h-px w-[9px] bg-[#444]" />
          <Fit w={67} className="pt-px leading-[26px]">Layouts</Fit>
        </div>
        <div className="grid w-[348px] shrink-0 grid-cols-4 gap-[4px] border-2 border-[#3c3a36] bg-[#3c3a36]">
          {LAYOUTS.map((l, i) => (
            <div key={i} className="flex h-[62px] items-center justify-center bg-[#f2f1ef] pr-px">
              <div className="flex h-[46px] w-[60px] flex-col gap-[2px] overflow-hidden border-b border-[#8f979c] bg-gradient-to-b from-[#d9e0e2] to-[#bcc1c6] p-[4px] pb-[3px]">{l}</div>
            </div>
          ))}
        </div>
      </div>
      <div className="ml-[4px] flex w-[32px] shrink-0 flex-col items-center">
        <div className="flex h-[35px] shrink-0 items-center pb-[3px]"><Ic><path d="M4 6.500h16M9 17.500h11" strokeWidth="1.400" /><circle cx="12" cy="6.500" r="2.500" fill={D} stroke="none" /><circle cx="6.500" cy="17.500" r="2" /></Ic></div>
        <i className="mb-[3px] block h-px w-[23px] shrink-0 bg-[#d8d7d5]" />
        <div className="mb-px flex h-[32px] w-[32px] shrink-0 items-center justify-center rounded-[4px] border border-[#b9b7b3]"><Ic><path d="M4.500 4.500h15v15h-15z" /><path d="M4 4h16v4H4zM6 9.500h4.500V18H6z" fill={D} stroke="none" /><path d="M12 10.500h6M12 13.500h4M12 16.500h3" /></Ic></div>
        {DECKS.map((e, i) => <div key={i} className="flex h-[35px] shrink-0 items-center"><Ic>{e}</Ic></div>)}
      </div>
    </div>
  );
}

/* ---------- bars ---------- */

function TopBar() {
  return (
    <div className="flex h-[30px] shrink-0 items-center bg-gradient-to-b from-[#5c5950] to-[#3d3b37] font-['Noto_Sans'] text-[#dfdbd2] shadow-[inset_0_1px_0_#6a675d]">
      <Fit w={417} className="ml-[8px] pt-px text-[17px] leading-[29px] font-bold">Blood-Donor-Finder.pptx - LibreOffice Impress</Fit>
      <div className="ml-auto flex items-center pr-[10px]">
        <svg width="24" height="18" viewBox="0 0 24 18" fill="none" stroke="#dfdbd2" strokeWidth="2"><path d="M1 6.500q11-9 22 0" stroke="#8b887f" /><path d="M4.500 10q7.500-6 15 0M8 13q4-3 8 0" /><path d="M10 15l2 2.500 2-2.500q-2-1.500-4 0z" fill="#dfdbd2" stroke="none" /></svg>
        <div className="ml-[16px] flex h-[25px] w-[25px] items-center justify-center rounded-[3px] bg-[#dfdbd2] text-[15px] leading-none text-[#3c3b37]"><Fit w={17}>En</Fit></div>
        <svg className="ml-[20px]" width="12" height="19" viewBox="0 0 12 19" fill="none" stroke="#858279" strokeWidth="1.500"><path d="M1.500 5l9 8.500-4.500 4V1.500L10.500 5.500l-9 8.500" /></svg>
        <svg className="ml-[24px]" width="31" height="16" viewBox="0 0 31 16"><rect x="1" y="1" width="26" height="14" rx="2" fill="none" stroke="#b4b1a7" strokeWidth="2" /><path d="M4 4h17v8H4z" fill="#dfdbd2" /><path d="M28 4.500h1.500v7H28" stroke="#b4b1a7" strokeWidth="1.500" fill="none" /></svg>
        <svg className="ml-[15px]" width="26" height="21" viewBox="0 0 26 21" fill="none" stroke="#dfdbd2" strokeWidth="2"><path d="M0 7h4l5-5v17l-5-5H0z" fill="#dfdbd2" stroke="none" /><path d="M12 7q3 3.500 0 7M15.500 4.500q5 6 0 12M19.500 2q7.500 8.500 0 17" /></svg>
        <Fit w={77} className="ml-[15px] text-[17px] leading-[30px]">10:13 AM</Fit>
        <svg className="ml-[16px]" width="20" height="20" viewBox="0 0 20 20" fill="none" stroke="#dfdbd2"><path d="M7.200 4.800a6 6 0 1 0 5.600 0" strokeWidth="2.400" /><path d="M10 0v9" strokeWidth="2.200" /><path d="M2 3.500l2.500 2M18 3.500l-2.500 2M0 11h3M17 11h3M3 17.500l2.300-2.300M17 17.500l-2.300-2.300M10 17v3" strokeWidth="2.400" /></svg>
      </div>
    </div>
  );
}

/** Status bar segment with a separator on its left edge. */
const Seg = ({ className, children }: { className: string; children?: React.ReactNode }) => (
  <div className={`flex h-[20px] shrink-0 items-center border-l border-[#cfcecb] ${className}`}>{children}</div>
);

function StatusBar() {
  return (
    <div className="flex h-[24px] shrink-0 items-center justify-end font-['Noto_Sans'] text-[15px] text-[#4c4c4c]">
      <Seg className="w-[414px] pl-[9px]">
        <svg width="14" height="14" className="-mt-[6px] mr-[6px]" fill="none"><path d="M6 2.500h7.500v10H2.500V8" stroke={D} strokeWidth="1.400" /><path d="M3 0v6M0 3h6" stroke={B} strokeWidth="1.300" /></svg>
        <Fit w={72} className="mr-[111px]">-0.24 / 7.96</Fit>
        <svg width="14" height="14" className="-mt-[6px] mr-[7px]" fill="none"><path d="M4.500 5.500h9v7h-9z" stroke={D} strokeWidth="1.400" /><path d="M4.500 1.500h9M4.500 0v3.500M13.500 0v3.500M1.500 5.500v7M0 5.500h3M0 12.500h3" stroke={B} /></svg>
        <Fit w={70}>0.00 x 0.00</Fit>
      </Seg>
      <Seg className="w-[24px] justify-center"><svg width="10" height="11" className="-mt-[2px]" fill="none" stroke="#d8374c" strokeWidth="1.300"><path d="M.7.7h7l1.600 1.600v8H.7zM3 .7v3h4v-3M3 10V6.500h4V10" /></svg></Seg>
      <Seg className="w-[30px]" />
      <Seg className="w-[95px] pl-[8px]"><Fit w={81}>Slide 2 of 12</Fit></Seg>
      <Seg className="w-[425px] pl-[8px]"><Fit w={116}>Title and Content</Fit></Seg>
      <Seg className="w-[23px] justify-center"><svg width="12" height="12" fill={D}><path d="M6 0l2 2.500H4zM6 12l2-2.500H4zM0 6l2.500-2v4zM12 6l-2.500-2v4zM5 5h2v2H5z" /></svg></Seg>
      <Seg className="w-[144px] gap-[7px] pl-[9px]">
        <i className="block h-px w-[7px] bg-[#444]" />
        <svg width="98" height="14"><path d="M0 7h98" stroke="#222" strokeWidth="2" /><path d="M48 2v10" stroke="#222" strokeWidth="1.600" /><path d="M33 2.500q3.500 1 3.500 4.500T33 11.500q-3.500-1-3.500-4.500T33 2.500z" fill="#f2f1ef" stroke="#444" strokeWidth="1.200" /></svg>
        <svg width="8" height="8"><path d="M4 0v8M0 4h8" stroke="#444" /></svg>
      </Seg>
      <Seg className="w-[55px] pl-[11px]"><Fit w={28}>71%</Fit></Seg>
    </div>
  );
}

function SlidePanel() {
  return (
    <div className="flex w-[249px] shrink-0 flex-col border-t-2 border-b-2 border-[#322f2c] pl-[2px]">
      <div className="flex h-[30px] shrink-0 items-center justify-between pr-[9px] pl-px font-['Noto_Sans'] text-[18px] font-bold text-[#4b4b4b]">
        <Fit w={52} className="leading-[30px]">Slides</Fit>
        <div className="pb-[2px]"><Close /></div>
      </div>
      <div className="flex h-[907px] w-[242px] shrink-0 overflow-hidden border border-[#322f2c] bg-white">
        <div className="flex w-[227px] shrink-0 flex-col gap-[6px] overflow-hidden pt-[6px] pl-[6px]">
          {SLIDES.map((s, i) => <Thumb key={i} n={i + 1}>{s}</Thumb>)}
        </div>
        <VScroll before="h-0" thumb="h-[541px]" />
      </div>
    </div>
  );
}

export default function App() {
  return (
    <div className="flex h-[1080px] w-[1920px] flex-col overflow-hidden bg-[#f2f1ef]">
      <TopBar />
      <div className="flex min-h-0 flex-1">
        <Launcher />
        <div className="flex min-w-0 flex-1 flex-col">
          <div className="h-[41px] shrink-0 border-t border-b border-t-white border-b-[#d6d5d3]"><StandardBar /></div>
          <div className="h-[41px] shrink-0 border-t border-b border-t-white border-b-[#d6d5d3]"><DrawingBar /></div>
          <div className="flex min-h-0 flex-1">
            <SlidePanel />
            <Splitter />
            <div className="flex w-[1196px] shrink-0 flex-col border-b-2 border-[#322f2c]">
              <div className="flex h-[930px] shrink-0">
                <div className="w-[1183px] shrink-0 overflow-hidden pt-[140px] pl-[17px]">
                  <div className="relative h-[639px] w-[1136px] bg-[#f2f2f2] font-['DejaVu_Sans'] shadow-[1px_1px_1px_#888,2px_3px_5px_#777,0_0_3px_#999]">
                    <Slide2 />
                  </div>
                </div>
                <VScroll before="h-[126px]" thumb="h-[656px]" />
              </div>
              <HScroll />
            </div>
            <Splitter right />
            <Properties />
          </div>
          <StatusBar />
        </div>
      </div>
    </div>
  );
}
